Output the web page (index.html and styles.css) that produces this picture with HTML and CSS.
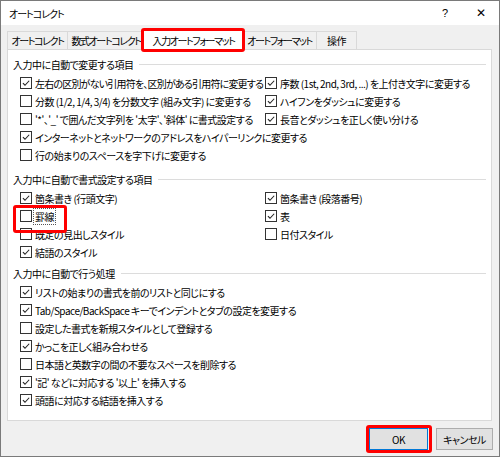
FILE: index.html
```html
<!DOCTYPE html>
<html lang="ja">
<head>
<meta charset="utf-8">
<title>オートコレクト</title>
<link rel="stylesheet" href="styles.css">
</head>
<body>
<div class="window">
  <div class="titlebar">
    <span class="title">オートコレクト</span>
    <span class="help">?</span>
    <span class="close">✕</span>
  </div>
  <div class="body">
    <div class="tabs">
      <div class="tab t1">オートコレクト</div>
      <div class="tab t2">数式オートコレクト</div>
      <div class="tab t3 selected marked">入力オートフォーマット</div>
      <div class="tab t4">オートフォーマット</div>
      <div class="tab t5">操作</div>
    </div>
    <div class="panel">
      <section class="group">
        <div class="group-head">入力中に自動で変更する項目</div>
        <div class="cols">
          <div class="col">
            <label class="opt tight"><span class="cb"><svg viewBox="0 0 12 12"><path d="M2.3 6.2 L4.8 8.7 L9.8 3.3"/></svg></span>左右の区別がない引用符を、区別がある引用符に変更する</label>
            <label class="opt"><span class="cb"></span>分数 (1/2, 1/4, 3/4) を分数文字 (組み文字) に変更する</label>
            <label class="opt"><span class="cb"></span>'*'、'_' で囲んだ文字列を '太字'、'斜体' に書式設定する</label>
            <label class="opt"><span class="cb"><svg viewBox="0 0 12 12"><path d="M2.3 6.2 L4.8 8.7 L9.8 3.3"/></svg></span>インターネットとネットワークのアドレスをハイパーリンクに変更する</label>
            <label class="opt"><span class="cb"></span>行の始まりのスペースを字下げに変更する</label>
          </div>
          <div class="col">
            <label class="opt"><span class="cb"><svg viewBox="0 0 12 12"><path d="M2.3 6.2 L4.8 8.7 L9.8 3.3"/></svg></span>序数 (1st, 2nd, 3rd, ...) を上付き文字に変更する</label>
            <label class="opt"><span class="cb"><svg viewBox="0 0 12 12"><path d="M2.3 6.2 L4.8 8.7 L9.8 3.3"/></svg></span>ハイフンをダッシュに変更する</label>
            <label class="opt"><span class="cb"><svg viewBox="0 0 12 12"><path d="M2.3 6.2 L4.8 8.7 L9.8 3.3"/></svg></span>長音とダッシュを正しく使い分ける</label>
          </div>
        </div>
      </section>
      <section class="group g2">
        <div class="group-head">入力中に自動で書式設定する項目</div>
        <div class="cols">
          <div class="col">
            <label class="opt"><span class="cb"><svg viewBox="0 0 12 12"><path d="M2.3 6.2 L4.8 8.7 L9.8 3.3"/></svg></span>箇条書き (行頭文字)</label>
            <label class="opt marked-opt"><span class="cb"></span><span class="focus">罫線</span></label>
            <label class="opt"><span class="cb"></span>既定の見出しスタイル</label>
            <label class="opt"><span class="cb"><svg viewBox="0 0 12 12"><path d="M2.3 6.2 L4.8 8.7 L9.8 3.3"/></svg></span>結語のスタイル</label>
          </div>
          <div class="col">
            <label class="opt"><span class="cb"><svg viewBox="0 0 12 12"><path d="M2.3 6.2 L4.8 8.7 L9.8 3.3"/></svg></span>箇条書き (段落番号)</label>
            <label class="opt"><span class="cb"><svg viewBox="0 0 12 12"><path d="M2.3 6.2 L4.8 8.7 L9.8 3.3"/></svg></span>表</label>
            <label class="opt"><span class="cb"></span>日付スタイル</label>
          </div>
        </div>
      </section>
      <section class="group g3">
        <div class="group-head">入力中に自動で行う処理</div>
        <div class="col">
          <label class="opt"><span class="cb"><svg viewBox="0 0 12 12"><path d="M2.3 6.2 L4.8 8.7 L9.8 3.3"/></svg></span>リストの始まりの書式を前のリストと同じにする</label>
          <label class="opt"><span class="cb"><svg viewBox="0 0 12 12"><path d="M2.3 6.2 L4.8 8.7 L9.8 3.3"/></svg></span>Tab/Space/BackSpace キーでインデントとタブの設定を変更する</label>
          <label class="opt"><span class="cb"></span>設定した書式を新規スタイルとして登録する</label>
          <label class="opt"><span class="cb"><svg viewBox="0 0 12 12"><path d="M2.3 6.2 L4.8 8.7 L9.8 3.3"/></svg></span>かっこを正しく組み合わせる</label>
          <label class="opt"><span class="cb"></span>日本語と英数字の間の不要なスペースを削除する</label>
          <label class="opt"><span class="cb"><svg viewBox="0 0 12 12"><path d="M2.3 6.2 L4.8 8.7 L9.8 3.3"/></svg></span>'記' などに対応する '以上' を挿入する</label>
          <label class="opt"><span class="cb"><svg viewBox="0 0 12 12"><path d="M2.3 6.2 L4.8 8.7 L9.8 3.3"/></svg></span>頭語に対応する結語を挿入する</label>
        </div>
      </section>
    </div>
    <div class="buttons">
      <button class="btn ok marked">OK</button>
      <button class="btn">キャンセル</button>
    </div>
  </div>
</div>
</body>
</html>
```

FILE: styles.css
```css
* { box-sizing: border-box; }
html, body { margin: 0; padding: 0; }
body {
  font-family: "Noto Sans CJK JP", "Noto Sans", sans-serif;
  font-size: 10px;
  letter-spacing: -0.5px;
  font-feature-settings: "palt";
  color: #000;
  background: #fff;
}
.window {
  width: 500px;
  height: 457px;
  border: 1px solid #7a7a7a;
  display: flex;
  flex-direction: column;
  background: #f0f0f0;
}
.titlebar {
  height: 24px;
  background: #fff;
  display: flex;
  align-items: center;
  padding-left: 8px;
  flex: none;
}
.title { flex: 1; letter-spacing: -1px; }
.help { width: 14px; text-align: center; margin-right: 22px; font-family: "Liberation Sans", sans-serif; font-size: 11px; letter-spacing: 0; }
.close { width: 14px; text-align: center; margin-right: 11px; font-family: "DejaVu Sans", sans-serif; font-size: 12px; letter-spacing: 0; }
.body {
  flex: 1;
  display: flex;
  flex-direction: column;
  padding: 6px 6px 0 6px;
}
.tabs {
  display: flex;
  height: 18px;
  align-items: flex-end;
  position: relative;
  z-index: 1;
  flex: none;
}
.tab {
  height: 18px;
  border: 1px solid #d9d9d9;
  border-bottom: none;
  background: #f0f0f0;
  display: flex;
  align-items: center;
  justify-content: center;
  margin-right: -1px;
  white-space: nowrap;
  flex: none;
  letter-spacing: -1.4px;
}
.t1 { width: 61px; }
.t2 { width: 78px; }
.t3 { width: 99px; }
.t4 { width: 75px; }
.t5 { width: 41px; letter-spacing: -0.5px; }
.tab.selected {
  height: 21px;
  background: #fff;
  margin-bottom: -1px;
  margin-left: -1px;
  margin-right: -2px;
  width: 101px;
  position: relative;
  z-index: 2;
}
.marked { position: relative; }
.marked::after {
  content: "";
  position: absolute;
  border: 3px solid #ff0000;
  border-radius: 3px;
  pointer-events: none;
}
.tab.marked::after { left: -3px; right: -2px; top: -2px; bottom: -2px; }
.panel {
  height: 372px;
  margin-right: 1px;
  border: 1px solid #d9d9d9;
  background: #fff;
  padding: 5px 5px 0 5px;
  flex: none;
}
.group-head {
  height: 18px;
  display: flex;
  align-items: center;
  white-space: nowrap;
  margin-bottom: 1px;
}
.group-head::after {
  content: "";
  flex: 1;
  border-top: 1px solid #dcdcdc;
  margin-left: 6px;
  margin-top: 1px;
}
.g2 { margin-top: 6px; }
.g3 { margin-top: 3px; }
.cols { display: flex; }
.cols .col:first-child { width: 252px; flex: none; }
.col { display: flex; flex-direction: column; padding-left: 7px; }
.cols .col + .col { padding-left: 0; }
.opt {
  height: 18px;
  display: flex;
  align-items: center;
  white-space: nowrap;
}
.opt.tight { letter-spacing: -0.8px; }
.cb {
  width: 12px;
  height: 12px;
  border: 1px solid #333;
  background: #fff;
  margin-right: 3px;
  flex: none;
  display: flex;
}
.cb svg { width: 10px; height: 10px; }
.cb path { fill: none; stroke: #222; stroke-width: 1.3; }
.focus {
  outline: 1px dotted #555;
  outline-offset: 0;
  padding: 1px 1px;
  margin-left: -1px;
  line-height: 13px;
}
.marked-opt { position: relative; }
.marked-opt::after {
  content: "";
  position: absolute;
  left: -7px;
  top: -2px;
  width: 48px;
  height: 22px;
  border: 3px solid #ff0000;
  border-radius: 3px;
}
.buttons {
  display: flex;
  justify-content: flex-end;
  gap: 8px;
  margin-top: 7px;
}
.btn {
  height: 22px;
  font-family: inherit;
  font-size: 10px;
  letter-spacing: -0.5px;
  font-feature-settings: "palt";
  background: #e1e1e1;
  border: 1px solid #adadad;
  padding: 0;
  color: #000;
}
.ok { width: 59px; border-color: #0078d7; }
.btn:not(.ok) { width: 57px; }
.btn.marked::after { left: -4px; right: -5px; top: -4px; bottom: -4px; }
```
